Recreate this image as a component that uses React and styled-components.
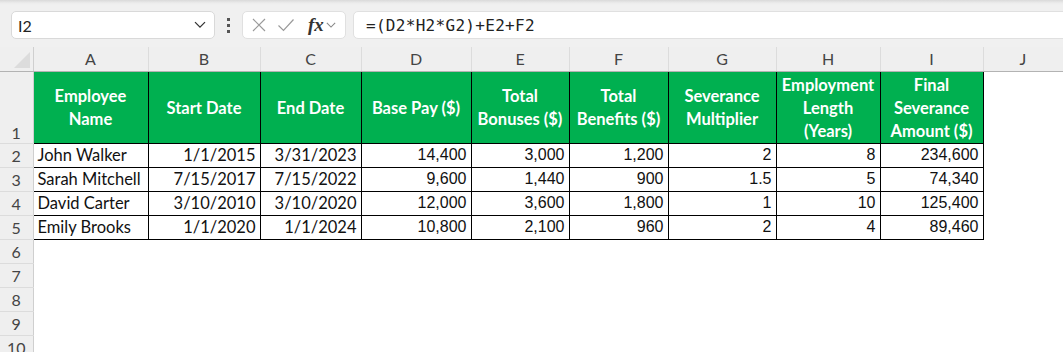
import styled, { createGlobalStyle } from 'styled-components';

const GlobalStyle = createGlobalStyle`
  body {
    margin: 0;
    background: #ffffff;
    font-family: Lato, "Noto Sans", sans-serif;
  }
`;

const Frame = styled.div`
  width: 1063px;
  height: 352px;
  overflow: hidden;
  background: #ffffff;
`;

const Toolbar = styled.div`
  display: flex;
  align-items: flex-start;
  height: 47px;
  box-sizing: border-box;
  padding: 11px 0 0 11px;
  background: linear-gradient(#d9d9d9 0, #ececec 3px, #f0f0f0 5px);
  overflow: hidden;
`;

const NameBox = styled.div`
  display: flex;
  align-items: center;
  justify-content: space-between;
  flex: 0 0 204px;
  height: 28px;
  box-sizing: border-box;
  padding: 0 8px 0 6px;
  background: #ffffff;
  border: 1px solid #d9d9d9;
  border-radius: 5px;
  font-family: Lato, sans-serif;
  font-size: 16px;
  color: #222;
`;

const Dots = styled.div`
  display: flex;
  flex-direction: column;
  align-items: center;
  gap: 3px;
  flex: 0 0 27px;
  padding-top: 7px;
  span {
    width: 3px;
    height: 3px;
    background: #555;
  }
`;

const FxBox = styled.div`
  display: flex;
  align-items: center;
  flex: 0 0 104px;
  height: 28px;
  box-sizing: border-box;
  padding: 0 5px 0 8px;
  gap: 10px;
  background: #ffffff;
  border: 1px solid #e0e0e0;
  border-radius: 5px;
`;

const Fx = styled.span`
  font-family: "Liberation Serif", serif;
  font-style: italic;
  font-weight: bold;
  font-size: 19px;
  color: #333;
  margin-left: 3px;
  margin-right: -8px;
`;

const FormulaInput = styled.div`
  display: flex;
  align-items: center;
  flex: 0 0 720px;
  margin-left: 7px;
  height: 28px;
  box-sizing: border-box;
  padding-left: 12px;
  background: #ffffff;
  border: 1px solid #e0e0e0;
  border-radius: 5px;
  font-family: "DejaVu Sans Mono", monospace;
  font-size: 16px;
  letter-spacing: 0.3px;
  color: #222;
`;

const Sheet = styled.table`
  border-collapse: collapse;
  table-layout: fixed;
  width: 1063px;
`;

const ColHead = styled.th`
  height: 23px;
  padding: 0;
  background: #efefef;
  border-right: 1px solid #dcdcdc;
  border-bottom: 1px solid #b3b3b3;
  font-family: Lato, sans-serif;
  font-weight: normal;
  font-size: 16px;
  color: #444;
  text-align: center;
`;

const Corner = styled.th`
  position: relative;
  padding: 0;
  background: #efefef;
  border-right: 1px solid #cfcfcf;
  border-bottom: 1px solid #b3b3b3;
  &::after {
    content: '';
    position: absolute;
    right: 3px;
    bottom: 3px;
    border-style: solid;
    border-width: 0 0 16px 16px;
    border-color: transparent transparent #dcdcdc transparent;
  }
`;

const RowHead = styled.th`
  padding: 0 0 ${(p) => (p.$tall ? '1px' : '0')};
  background: #efefef;
  border-right: 1px solid #cfcfcf;
  border-bottom: 1px solid #dcdcdc;
  font-family: Lato, sans-serif;
  font-weight: normal;
  font-size: 16px;
  color: #444;
  text-align: center;
  vertical-align: ${(p) => (p.$tall ? 'bottom' : 'middle')};
`;

const HeadCell = styled.td`
  padding: 2px 0 0;
  background: #00b050;
  border: 1px solid #000;
  border-top: none;
  font-family: Lato, sans-serif;
  font-weight: bold;
  font-size: 16.5px;
  line-height: 23px;
  color: #ffffff;
  text-align: center;
  white-space: nowrap;
`;

const Cell = styled.td`
  padding: 0 4px;
  border: 1px solid #000;
  font-family: ${(p) => (p.$num ? '"Liberation Sans", Arial, sans-serif' : 'Lato, sans-serif')};
  font-size: ${(p) => (p.$num ? '16px' : '16.5px')};
  color: #111;
  text-align: ${(p) => (p.$left ? 'left' : 'right')};
  white-space: nowrap;
  overflow: hidden;
`;

const Empty = styled.td`
  padding: 0;
`;

const Row = styled.tr`
  height: ${(p) => p.$h}px;
`;

const widths = [33, 115, 112, 101, 110, 98, 99, 108, 104, 103, 80];
const letters = ['A', 'B', 'C', 'D', 'E', 'F', 'G', 'H', 'I', 'J'];

const headers = [
  ['Employee', 'Name'],
  ['Start Date'],
  ['End Date'],
  ['Base Pay ($)'],
  ['Total', 'Bonuses ($)'],
  ['Total', 'Benefits ($)'],
  ['Severance', 'Multiplier'],
  ['Employment', 'Length', '(Years)'],
  ['Final', 'Severance', 'Amount ($)'],
];

const rows = [
  ['John Walker', '1/1/2015', '3/31/2023', '14,400', '3,000', '1,200', '2', '8', '234,600'],
  ['Sarah Mitchell', '7/15/2017', '7/15/2022', '9,600', '1,440', '900', '1.5', '5', '74,340'],
  ['David Carter', '3/10/2010', '3/10/2020', '12,000', '3,600', '1,800', '1', '10', '125,400'],
  ['Emily Brooks', '1/1/2020', '1/1/2024', '10,800', '2,100', '960', '2', '4', '89,460'],
];

const XIcon = () => (
  <svg width="16" height="16" viewBox="0 0 16 16">
    <path d="M2 2 L14 14 M14 2 L2 14" stroke="#9a9a9a" strokeWidth="1.2" fill="none" />
  </svg>
);

const CheckIcon = () => (
  <svg width="18" height="16" viewBox="0 0 18 16">
    <path d="M1.5 8.5 L6.5 13.5 L16.5 2.5" stroke="#9a9a9a" strokeWidth="1.2" fill="none" />
  </svg>
);

const Chevron = ({ size = 12, color = '#333' }) => (
  <svg width={size} height={size * 0.6} viewBox="0 0 12 7">
    <path d="M1 1 L6 6 L11 1" stroke={color} strokeWidth="1.3" fill="none" />
  </svg>
);

const App = () => (
  <Frame>
    <GlobalStyle />
    <Toolbar>
      <NameBox>
        <span>I2</span>
        <Chevron />
      </NameBox>
      <Dots>
        <span />
        <span />
        <span />
      </Dots>
      <FxBox>
        <XIcon />
        <CheckIcon />
        <Fx>fx</Fx>
        <Chevron size={10} color="#888" />
      </FxBox>
      <FormulaInput>=(D2*H2*G2)+E2+F2</FormulaInput>
    </Toolbar>
    <Sheet>
      <colgroup>
        {widths.map((w, i) => (
          <col key={i} style={{ width: w }} />
        ))}
      </colgroup>
      <tbody>
        <Row $h={24}>
          <Corner />
          {letters.map((l) => (
            <ColHead key={l}>{l}</ColHead>
          ))}
        </Row>
        <Row $h={72}>
          <RowHead $tall>1</RowHead>
          {headers.map((lines, i) => (
            <HeadCell key={i}>
              {lines.map((t, j) => (
                <div key={j}>{t}</div>
              ))}
            </HeadCell>
          ))}
          <Empty />
        </Row>
        {rows.map((r, i) => (
          <Row $h={24} key={i}>
            <RowHead>{i + 2}</RowHead>
            {r.map((v, j) => (
              <Cell key={j} $left={j === 0} $num={j > 2}>
                {v}
              </Cell>
            ))}
            <Empty />
          </Row>
        ))}
        {[6, 7, 8, 9, 10].map((n) => (
          <Row $h={24} key={n}>
            <RowHead>{n}</RowHead>
            {letters.map((l) => (
              <Empty key={l} />
            ))}
          </Row>
        ))}
      </tbody>
    </Sheet>
  </Frame>
);

export default App;
